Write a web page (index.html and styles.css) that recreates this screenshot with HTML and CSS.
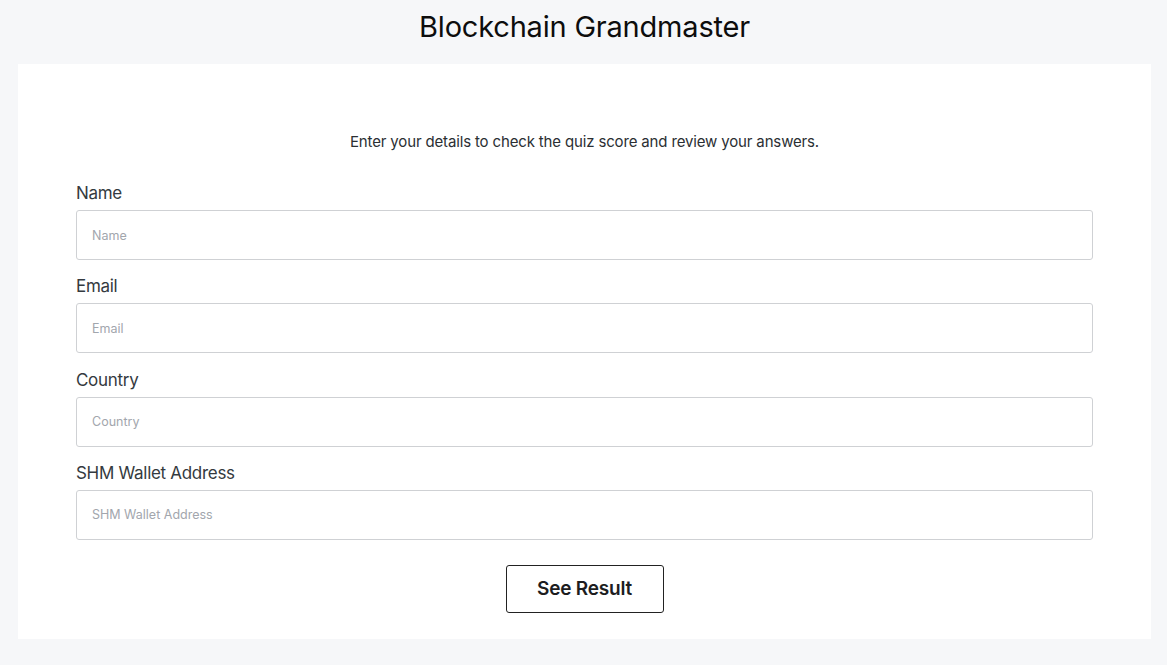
FILE: index.html
```html
<!DOCTYPE html>
<html lang="en">
<head>
<meta charset="utf-8">
<title>Blockchain Grandmaster</title>
<link rel="stylesheet" href="styles.css">
</head>
<body>
  <h1 class="title">Blockchain Grandmaster</h1>
  <main class="card">
    <p class="intro">Enter your details to check the quiz score and review your answers.</p>
    <form class="form">
      <div class="field">
        <label class="label" for="name">Name</label>
        <input class="input" id="name" type="text" placeholder="Name">
      </div>
      <div class="field">
        <label class="label" for="email">Email</label>
        <input class="input" id="email" type="email" placeholder="Email">
      </div>
      <div class="field">
        <label class="label" for="country">Country</label>
        <input class="input" id="country" type="text" placeholder="Country">
      </div>
      <div class="field">
        <label class="label" for="wallet">SHM Wallet Address</label>
        <input class="input" id="wallet" type="text" placeholder="SHM Wallet Address">
      </div>
      <div class="actions">
        <button class="button" type="button">See Result</button>
      </div>
    </form>
  </main>
</body>
</html>
```
FILE: styles.css
```css
* { box-sizing: border-box; }
html, body { height: 100%; }
body {
  margin: 0;
  padding: 7px 16px 0 18px;
  background: #f6f7f9;
  font-family: Inter, "Noto Sans", sans-serif;
  color: #1f2328;
}
.title {
  margin: 0 0 17px;
  text-align: center;
  font-size: 29px;
  line-height: 40px;
  font-weight: 400;
  letter-spacing: -0.2px;
  color: #0d0d0d;
}
.card {
  background: #fff;
  padding: 66px 58px 26px;
}
.intro {
  margin: 0 0 26px;
  text-align: center;
  font-size: 15px;
  line-height: 24px;
  letter-spacing: -0.15px;
  color: #2b2f33;
}
.form {
  display: flex;
  flex-direction: column;
  gap: 13.33px;
}
.field {
  display: flex;
  flex-direction: column;
  gap: 4px;
}
.label {
  font-size: 17px;
  line-height: 26px;
  letter-spacing: -0.3px;
  color: #343a40;
}
.input {
  height: 50px;
  width: 100%;
  border: 1px solid #cfd1d4;
  border-radius: 3px;
  padding: 0 15px;
  font-family: inherit;
  font-size: 12.5px;
  color: #333;
  background: #fff;
}
.input::placeholder { color: #a2a6ad; }
.actions {
  display: flex;
  justify-content: center;
  margin-top: 11.5px;
}
.button {
  width: 158px;
  height: 48px;
  border: 1px solid #222;
  border-radius: 3px;
  background: #fff;
  font-family: inherit;
  font-size: 19px;
  font-weight: 600;
  letter-spacing: -0.2px;
  color: #1d1d1f;
}
```
